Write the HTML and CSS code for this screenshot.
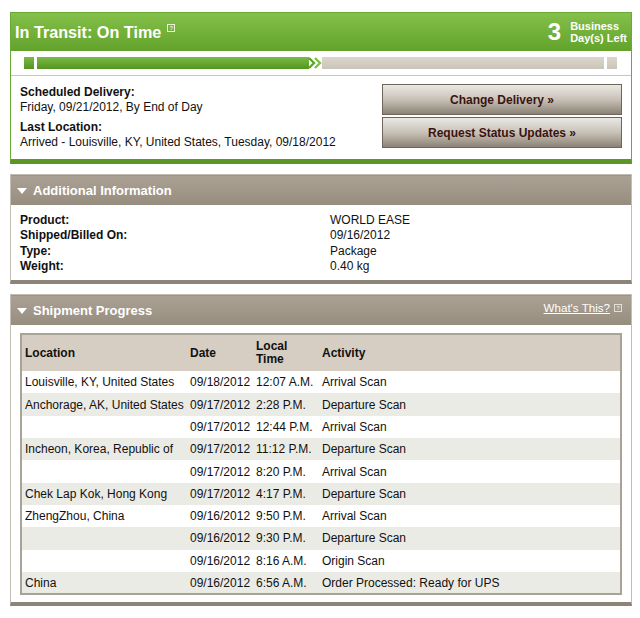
FILE: index.html
```html
<!DOCTYPE html>
<html>
<head>
<meta charset="utf-8">
<link rel="stylesheet" href="styles.css">
</head>
<body>
<div class="page">
  <section class="status">
    <div class="status-head">
      <h1 class="status-title">In Transit: On Time <span class="help help-light">?</span></h1>
      <div class="days">
        <span class="days-num">3</span>
        <span class="days-label">Business<br>Day(s) Left</span>
      </div>
    </div>
    <div class="progress">
      <span class="seg seg-green seg-small"></span>
      <span class="seg seg-green seg-done"></span>
      <svg class="chev" width="14" height="14" viewBox="0 0 14 14"><path d="M1 2 L6 7 L1 12" fill="none" stroke="#5fa52c" stroke-width="2.4"/><path d="M7 2 L12 7 L7 12" fill="none" stroke="#7cc044" stroke-width="2.4"/></svg>
      <span class="seg seg-grey seg-rest"></span>
      <span class="seg seg-grey seg-small"></span>
    </div>
    <div class="status-body">
      <div class="status-info">
        <div class="info-group">
          <div class="lbl">Scheduled Delivery:</div>
          <div>Friday, 09/21/2012, By End of Day</div>
        </div>
        <div class="info-group">
          <div class="lbl">Last Location:</div>
          <div>Arrived - Louisville, KY, United States, Tuesday, 09/18/2012</div>
        </div>
      </div>
      <div class="actions">
        <a class="btn">Change Delivery »</a>
        <a class="btn">Request Status Updates »</a>
      </div>
    </div>
  </section>

  <section class="panel">
    <div class="panel-head">
      <h2 class="panel-title"><span class="tri"></span>Additional Information</h2>
    </div>
    <div class="panel-body info-grid">
      <div class="lbl">Product:</div><div>WORLD EASE</div>
      <div class="lbl">Shipped/Billed On:</div><div>09/16/2012</div>
      <div class="lbl">Type:</div><div>Package</div>
      <div class="lbl">Weight:</div><div>0.40 kg</div>
    </div>
  </section>

  <section class="panel">
    <div class="panel-head">
      <h2 class="panel-title"><span class="tri"></span>Shipment Progress</h2>
      <a class="whats">What's This?</a><span class="help help-grey">?</span>
    </div>
    <div class="panel-body table-wrap">
      <table class="track">
        <colgroup><col class="c-loc"><col class="c-date"><col class="c-time"><col></colgroup>
        <thead>
          <tr><th>Location</th><th>Date</th><th>Local<br>Time</th><th>Activity</th></tr>
        </thead>
        <tbody>
          <tr><td>Louisville, KY, United States</td><td>09/18/2012</td><td>12:07 A.M.</td><td>Arrival Scan</td></tr>
          <tr class="alt"><td>Anchorage, AK, United States</td><td>09/17/2012</td><td>2:28 P.M.</td><td>Departure Scan</td></tr>
          <tr><td></td><td>09/17/2012</td><td>12:44 P.M.</td><td>Arrival Scan</td></tr>
          <tr class="alt"><td>Incheon, Korea, Republic of</td><td>09/17/2012</td><td>11:12 P.M.</td><td>Departure Scan</td></tr>
          <tr><td></td><td>09/17/2012</td><td>8:20 P.M.</td><td>Arrival Scan</td></tr>
          <tr class="alt"><td>Chek Lap Kok, Hong Kong</td><td>09/17/2012</td><td>4:17 P.M.</td><td>Departure Scan</td></tr>
          <tr><td>ZhengZhou, China</td><td>09/16/2012</td><td>9:50 P.M.</td><td>Arrival Scan</td></tr>
          <tr class="alt"><td></td><td>09/16/2012</td><td>9:30 P.M.</td><td>Departure Scan</td></tr>
          <tr><td></td><td>09/16/2012</td><td>8:16 A.M.</td><td>Origin Scan</td></tr>
          <tr class="alt"><td>China</td><td>09/16/2012</td><td>6:56 A.M.</td><td>Order Processed: Ready for UPS</td></tr>
        </tbody>
      </table>
    </div>
  </section>
</div>
</body>
</html>
```

FILE: styles.css
```css
* { box-sizing: border-box; }
html, body { margin: 0; padding: 0; background: #fff; }
body {
  font-family: "Liberation Sans", Arial, Helvetica, sans-serif;
  font-size: 12px;
  color: #111;
}
.page {
  width: 622px;
  margin: 0 0 0 10px;
  padding-top: 12px;
  display: flex;
  flex-direction: column;
  gap: 10px;
}

/* status panel */
.status {
  border: 1px solid #6aa934;
  border-bottom: 5px solid #5a9628;
}
.status-head {
  height: 38px;
  background: linear-gradient(#84c04a, #62a22b);
  display: flex;
  align-items: center;
  justify-content: space-between;
  padding: 0 4px 0 4px;
  color: #fff;
}
.status-title {
  margin: 0;
  font-size: 16.2px;
  font-weight: bold;
  display: flex;
  align-items: flex-start;
  gap: 6px;
}
.help {
  display: inline-flex;
  align-items: center;
  justify-content: center;
  width: 8px;
  height: 8px;
  font-size: 6px;
  font-weight: bold;
  line-height: 1;
}
.help-light {
  border: 1px solid #e8f3dc;
  color: #e8f3dc;
  margin-top: 1px;
}
.help-grey {
  border: 1px solid #e4e0d9;
  color: #e4e0d9;
  margin-left: 4px;
  margin-top: -6px;
}
.days {
  display: flex;
  align-items: center;
  gap: 9px;
}
.days-num {
  font-size: 24px;
  font-weight: bold;
}
.days-label {
  font-size: 11px;
  font-weight: bold;
  line-height: 12px;
}

.progress {
  height: 25px;
  border-bottom: 1px solid #b7d69c;
  display: flex;
  align-items: center;
  padding: 0 14px 0 13px;
}
.seg {
  display: block;
  height: 12px;
}
.seg-green { background: linear-gradient(#79bb46, #55951f); }
.seg-grey { background: linear-gradient(#dcd6cc, #cbc4b8); }
.seg-small { width: 10px; }
.seg-done { width: 272px; margin-left: 3px; }
.chev { flex: none; margin-left: -1px; margin-right: 0; }
.seg-rest { flex: 1; margin-right: 3px; }

.status-body {
  display: flex;
  justify-content: space-between;
  padding: 8px 9px 10px 9px;
}
.status-info {
  line-height: 14.5px;
  display: flex;
  flex-direction: column;
  gap: 6px;
  padding-top: 1px;
}
.lbl { font-weight: bold; }
.actions {
  width: 240px;
  display: flex;
  flex-direction: column;
  gap: 2px;
}
.btn {
  display: flex;
  align-items: center;
  justify-content: center;
  height: 31px;
  border: 1px solid #6d645a;
  background: linear-gradient(#ebe8e3 0%, #c8c1b7 50%, #8c8275 100%);
  color: #3a1410;
  font-weight: bold;
  font-size: 12px;
}

/* grey panels */
.panel {
  border: 1px solid #c4bdb2;
  border-bottom: 4px solid #8d8478;
}
.panel-head {
  height: 30px;
  background: linear-gradient(#aaa194, #978d7f);
  border-top: 1px solid #9c9386;
  display: flex;
  align-items: center;
  padding: 0 9px 0 6px;
  color: #fff;
}
.panel-title {
  margin: 0;
  flex: 1;
  font-size: 13px;
  font-weight: bold;
  display: flex;
  align-items: center;
  gap: 6px;
}
.tri {
  width: 0;
  height: 0;
  border-left: 5px solid transparent;
  border-right: 5px solid transparent;
  border-top: 6px solid #fff;
}
.whats {
  color: #fff;
  text-decoration: underline;
  font-size: 11.6px;
  margin-top: -7px;
}
.panel-body { background: #fff; }
.info-grid {
  display: grid;
  grid-template-columns: 310px 1fr;
  line-height: 15.3px;
  padding: 8px 9px 6px 9px;
}

.table-wrap { padding: 8px 9px 7px 9px; }
.track {
  width: 100%;
  table-layout: fixed;
  border-collapse: collapse;
  border: 2px solid #a9a296;
}
.track th {
  background: #d6cec2;
  text-align: left;
  font-weight: bold;
  height: 37px;
  padding: 0 3px;
  line-height: 13px;
  vertical-align: middle;
}
.track td {
  height: 22.3px;
  padding: 0 3px;
  vertical-align: middle;
  white-space: nowrap;
  overflow: visible;
}
.track .alt td { background: #ebebe6; }
.c-loc { width: 166px; }
.c-date { width: 66px; }
.c-time { width: 66px; }
```
